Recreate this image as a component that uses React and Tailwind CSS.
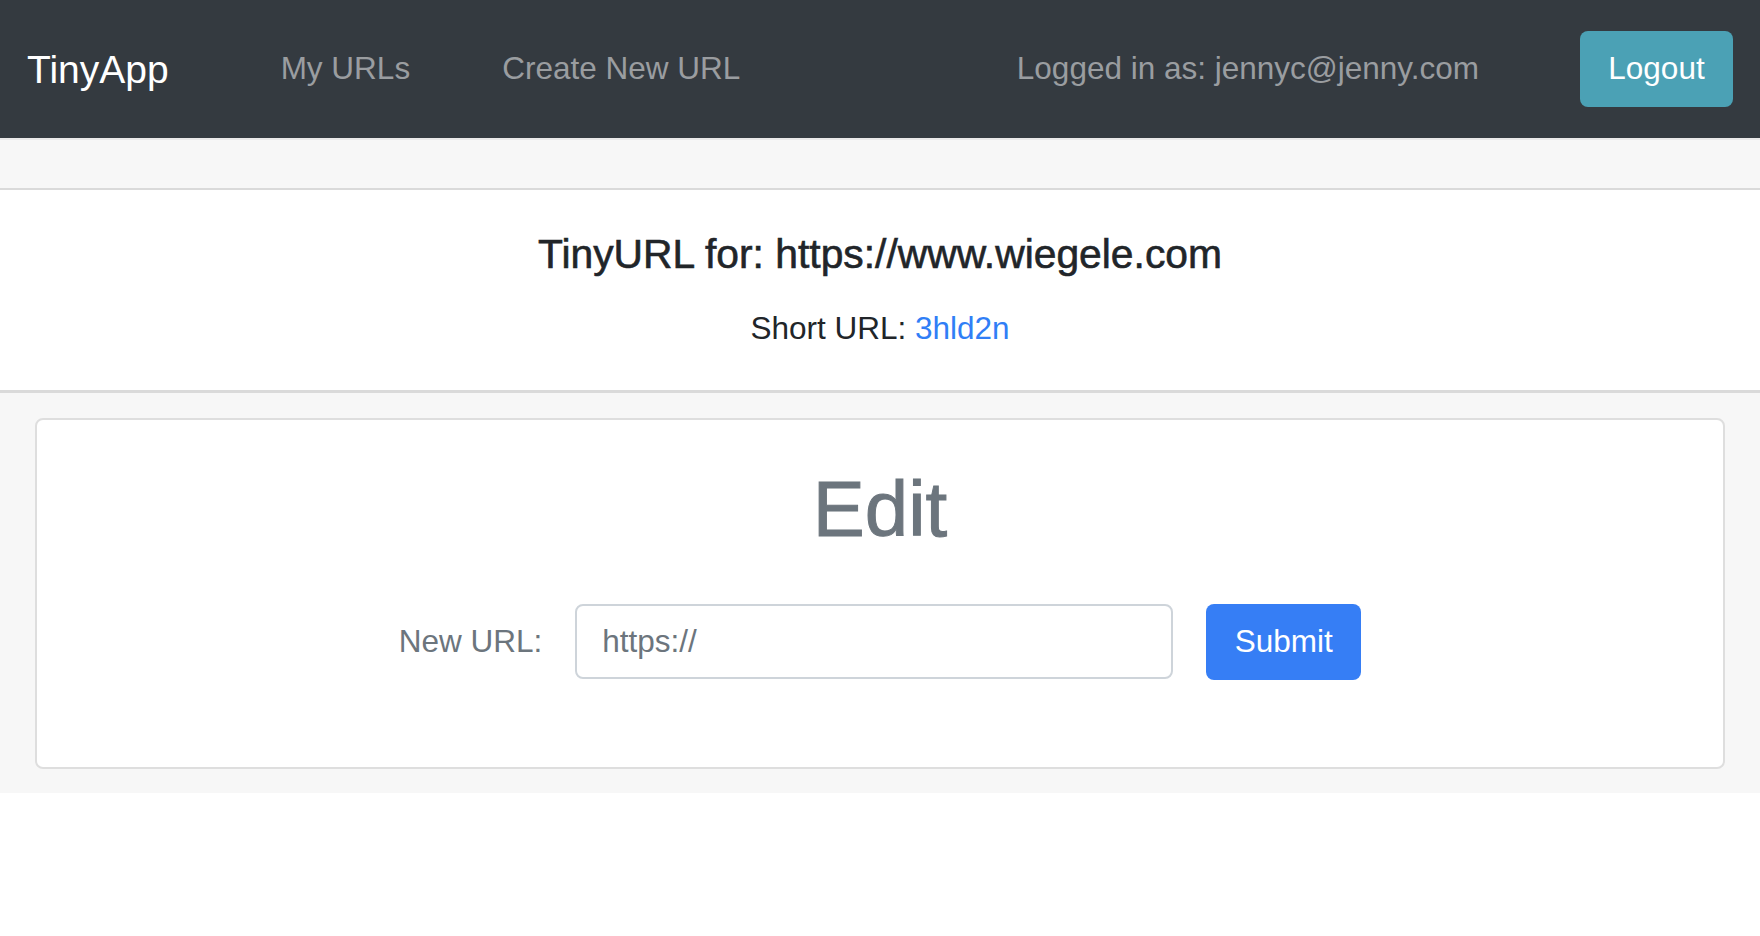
import React from 'react';

const font = { fontFamily: '"Liberation Sans", Arial, sans-serif' };

const Navbar = () => {
  return (
    <nav className="h-[138px] bg-[#343a40] flex items-center px-[27px]">
      <a className="text-[39px] leading-none text-white">TinyApp</a>
      <a className="ml-[112px] text-[31.5px] leading-none text-[#9a9da0]">My URLs</a>
      <a className="ml-[92px] text-[31.5px] leading-none text-[#9a9da0]">Create New URL</a>
      <div className="ml-auto flex items-center">
        <span className="text-[31.5px] leading-none text-[#9a9da0]">Logged in as: jennyc@jenny.com</span>
        <button className="ml-[101px] w-[153px] h-[76px] rounded-[8px] bg-[#4ba1b5] text-white text-[31.5px] leading-none">
          Logout
        </button>
      </div>
    </nav>
  );
};

export default function App() {
  return (
    <div className="min-h-[936px] bg-white" style={font}>
      <Navbar />

      <div className="h-[50px] bg-[#f7f7f7] border-t-2 border-[#e9e9e9]" />

      <section className="bg-white border-t-2 border-b-[3px] border-[#dadada] pt-[40px] pb-[38px] text-center">
        <h5 className="text-[40.8px] leading-[1.2] font-medium text-[#212529] [-webkit-text-stroke:0.6px_#212529]">
          TinyURL for: https://www.wiegele.com
        </h5>
        <p className="mt-[26px] text-[31.5px] leading-[1.5] text-[#212529]">
          Short URL: <a className="text-[#307ef6]">3hld2n</a>
        </p>
      </section>

      <div className="bg-[#f7f7f7] px-[35px] pt-[25px] pb-[24px]">
        <div className="bg-white border-2 border-[#dedede] rounded-[8px] pt-[43px] pb-[87px] text-center">
          <h1 className="text-[78px] leading-[1.2] text-[#6c757d] [-webkit-text-stroke:1px_#6c757d]">Edit</h1>
          <form
            className="mt-[47px] flex items-center justify-center"
            onSubmit={(e) => e.preventDefault()}
          >
            <label className="text-[31.5px] leading-none text-[#6c757d]">New URL:</label>
            <input
              type="text"
              placeholder="https://"
              className="ml-[33px] w-[598px] h-[75px] border-2 border-[#ced4da] rounded-[8px] px-[25px] text-[31.5px] text-[#495057] placeholder-[#6c757d] outline-none"
            />
            <button
              type="submit"
              className="ml-[33px] w-[155px] h-[76px] rounded-[8px] bg-[#367ef5] text-white text-[31.5px] leading-none"
            >
              Submit
            </button>
          </form>
        </div>
      </div>
    </div>
  );
}
